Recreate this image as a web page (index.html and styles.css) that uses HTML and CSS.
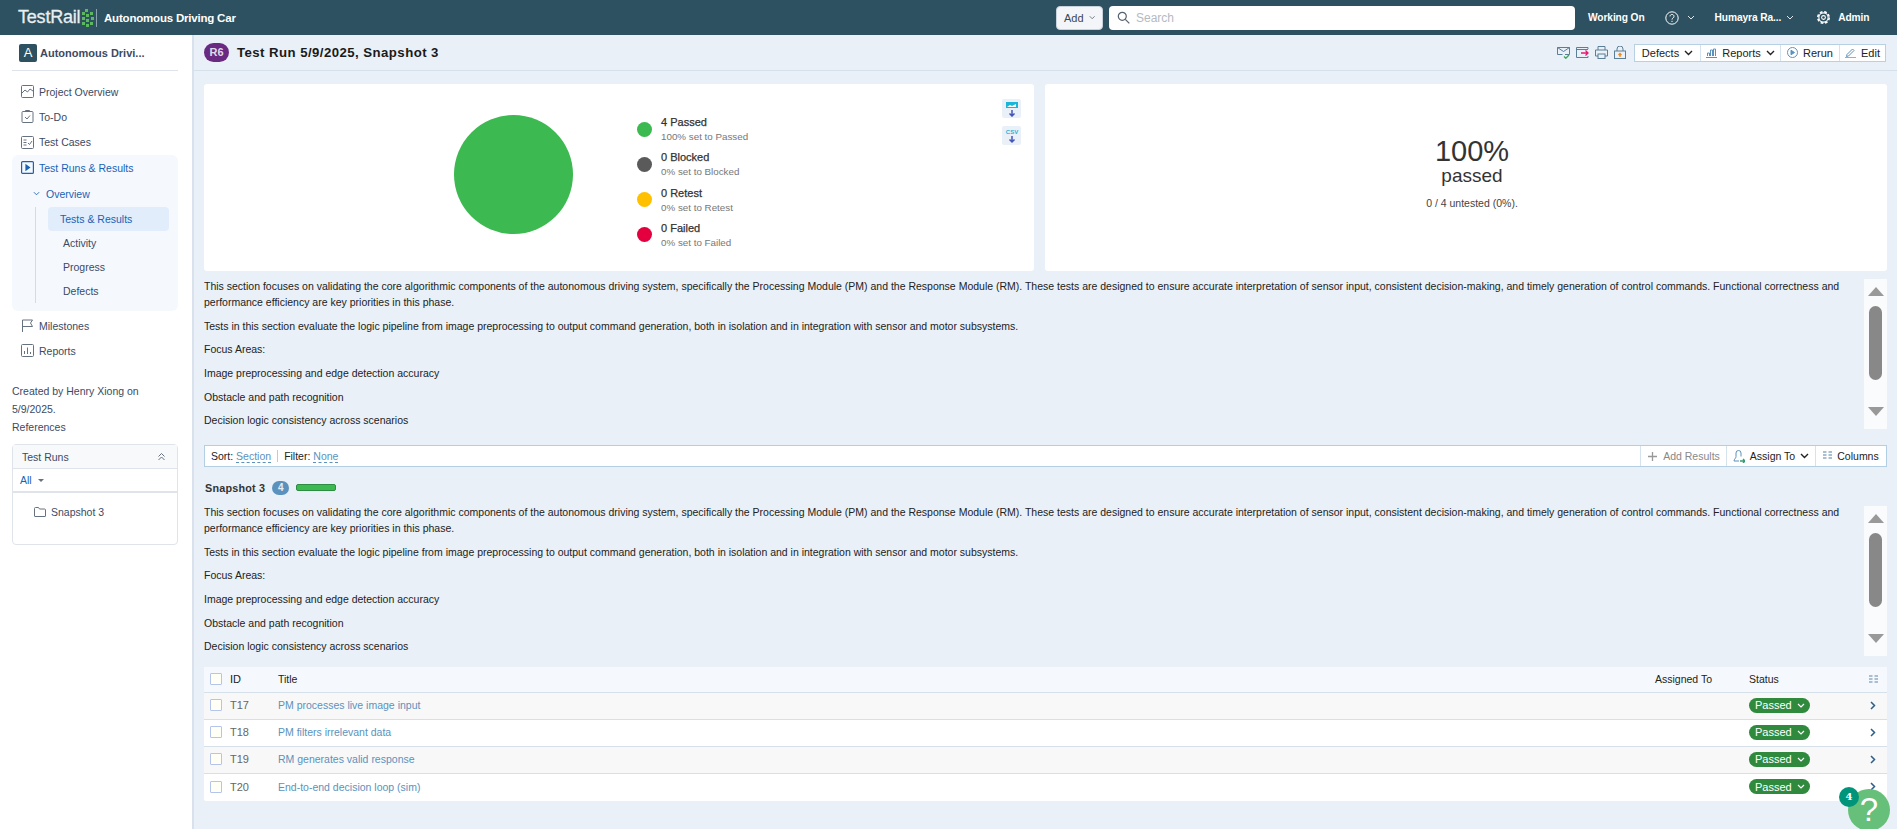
FILE: index.html
```html
<!DOCTYPE html>
<html lang="en">
<head>
    <meta charset="UTF-8" />
    <title>Test Run 5/9/2025, Snapshot 3 - TestRail</title>
    <link rel="stylesheet" href="styles.css">
</head>
<body>
    <header class="topbar">
        <div class="logo">
            <span class="logo-text">TestRail</span>
            <svg class="logo-mark" width="12" height="18" viewBox="0 0 12 18" fill="#5cb85c"><rect x="0" y="3" width="3" height="3"/><rect x="3" y="0" width="3" height="3"/><rect x="4" y="5" width="3" height="3"/><rect x="8" y="3" width="3" height="3"/><rect x="0" y="8" width="3" height="3"/><rect x="9" y="8" width="3" height="3"/><rect x="4" y="10" width="3" height="3"/><rect x="8" y="13" width="3" height="3"/><rect x="0" y="13" width="3" height="3"/><rect x="4" y="15" width="3" height="3"/></svg>
        </div>
        <div class="project-name">Autonomous Driving Car</div>
        <button class="add-btn">Add <svg width="8" height="5" viewBox="0 0 8 5" fill="none" stroke="#56616e"><path d="M1 1l3 3 3-3"/></svg></button>
        <div class="search">
            <svg width="13" height="13" viewBox="0 0 13 13" fill="none" stroke="#56616e" stroke-width="1.2"><circle cx="5.3" cy="5.3" r="4"/><path d="M8.3 8.3l4 4"/></svg>
            <span>Search</span>
        </div>
        <nav class="top-links">
            <span class="working-on">Working On</span>
            <span class="help-link">
                <svg width="14" height="14" viewBox="0 0 14 14" fill="none" stroke="#fff"><circle cx="7" cy="7" r="6.2"/><path d="M5 5.4c0-2.6 4-2.6 4 0 0 1.6-2 1.5-2 3.2"/><path d="M7 9.8v1.2"/></svg>
                <svg width="8" height="5" viewBox="0 0 8 5" fill="none" stroke="#dfe6ea"><path d="M1 1l3 3 3-3"/></svg>
            </span>
            <span class="user-link">Humayra Ra... <svg width="8" height="5" viewBox="0 0 8 5" fill="none" stroke="#dfe6ea"><path d="M1 1l3 3 3-3"/></svg></span>
            <span class="admin-link">
                <svg width="13" height="13" viewBox="0 0 24 24" fill="none" stroke="#fff"><circle cx="12" cy="12" r="10.500" stroke-width="3" stroke-dasharray="5 3.250"/><circle cx="12" cy="12" r="8.500" stroke-width="2"/><circle cx="12" cy="12" r="3.500" stroke-width="2"/></svg>
                Admin
            </span>
        </nav>
    </header>

    <div class="page">
        <aside class="sidebar">
            <div class="project-head">
                <span class="project-avatar">A</span>
                <span class="project-title">Autonomous Drivi...</span>
            </div>

            <ul class="nav">
                <li class="nav-item">
                    <svg width="13" height="13" viewBox="0 0 13 13" fill="none" stroke="#66727f"><rect x=".5" y=".5" width="12" height="12" rx="1"/><path d="M1 8l3-3 2.500 2L9 4l3 2"/></svg>
                    Project Overview
                </li>
                <li class="nav-item">
                    <svg width="13" height="13" viewBox="0 0 13 13" fill="none" stroke="#66727f"><rect x="1" y="1.500" width="11" height="11" rx="1"/><path d="M4.500 1V.5h4V1M4 7l2 2 3-3.500"/></svg>
                    To-Do
                </li>
                <li class="nav-item">
                    <svg width="13" height="13" viewBox="0 0 13 13" fill="none" stroke="#66727f"><rect x=".5" y=".5" width="12" height="12" rx="1"/><path d="M2.500 4h3M2.500 6.500h3M2.500 9h3M7 7l1.500 1.500L11 5"/></svg>
                    Test Cases
                </li>
                <li class="nav-group">
                    <div class="nav-item nav-item-active">
                        <svg width="13" height="13" viewBox="0 0 13 13" fill="none" stroke="#1a62b5" stroke-width="1.200"><rect x=".6" y=".6" width="11.800" height="11.800" rx="1"/><path d="M5 4l3.500 2.500L5 9z" fill="#1a62b5"/></svg>
                        Test Runs &amp; Results
                    </div>
                    <div class="nav-overview">
                        <svg width="7" height="5" viewBox="0 0 8 5" fill="none" stroke="#1a62b5"><path d="M1 1l3 3 3-3"/></svg>
                        Overview
                    </div>
                    <ul class="subnav">
                        <li class="subnav-item subnav-current">Tests &amp; Results</li>
                        <li class="subnav-item">Activity</li>
                        <li class="subnav-item">Progress</li>
                        <li class="subnav-item">Defects</li>
                    </ul>
                </li>
                <li class="nav-item">
                    <svg width="13" height="13" viewBox="0 0 13 13" fill="none" stroke="#66727f"><path d="M1.500 13V1h10l-2 3 2 3.500H1.500"/></svg>
                    Milestones
                </li>
                <li class="nav-item">
                    <svg width="13" height="13" viewBox="0 0 13 13" fill="none" stroke="#66727f"><rect x=".5" y=".5" width="12" height="12" rx="1"/><path d="M3.500 10V7M6.500 10V3.500M9.500 10V8"/></svg>
                    Reports
                </li>
            </ul>

            <div class="created">
                Created by Henry Xiong on 5/9/2025.<br>
                References
            </div>

            <div class="runs-box">
                <div class="runs-head">
                    <span>Test Runs</span>
                    <svg width="9" height="9" viewBox="0 0 9 9" fill="none" stroke="#66727f"><path d="M1.500 4.500l3-3 3 3M1.500 8l3-3 3 3"/></svg>
                </div>
                <div class="runs-filter">All <i class="caret"></i></div>
                <div class="runs-tree">
                    <svg width="12" height="10" viewBox="0 0 12 10" fill="none" stroke="#66727f"><path d="M.5 9V1.500a1 1 0 0 1 1-1h3l1 1.500h5a1 1 0 0 1 1 1V9a.5.5 0 0 1-.5.5h-10A.5.5 0 0 1 .5 9z"/></svg>
                    Snapshot 3
                </div>
            </div>
        </aside>

        <main class="main">
            <div class="title-bar">
                <span class="run-badge">R6</span>
                <h1>Test Run 5/9/2025, Snapshot 3</h1>
                <div class="title-icons">
                    <svg width="13" height="13" viewBox="0 0 13 13" fill="none" stroke="#5b7f96"><path d="M.5 1.500h12v7H8M.5 1.500v7h5M.5 1.500l6 4 6-4"/><path d="M7 10.500l1.800 1.800L12 9" stroke="#3aa655" stroke-width="1.300"/></svg>
                    <svg width="13" height="13" viewBox="0 0 13 13" fill="none" stroke="#5b7f96"><path d="M12 3V1.500H.5v10H12V10M.5 3.500H12"/><path d="M5 7h7M9.500 4.500L12 7l-2.500 2.500" stroke="#e5186d" stroke-width="1.300"/></svg>
                    <svg width="13" height="13" viewBox="0 0 13 13" fill="none" stroke="#5b7f96"><path d="M3 4V.5h7V4M3 10H.5V4h12v6H10"/><rect x="3" y="8" width="7" height="4.500"/></svg>
                    <svg width="12" height="13" viewBox="0 0 12 13" fill="none" stroke="#5b7f96"><rect x=".5" y="5" width="11" height="7.500"/><path d="M3 5V3a3 3 0 0 1 6 0v2"/><path d="M6 11V7.500M4.500 9L6 7.500 7.500 9" stroke="#ee8a1c" stroke-width="1.300"/></svg>
                </div>
                <div class="btn-group">
                    <span class="tool-btn">Defects <svg class="chev" width="9" height="6" viewBox="0 0 9 6" fill="none" stroke="#222" stroke-width="1.400"><path d="M1 1l3.500 3.500L8 1"/></svg></span>
                    <span class="tool-btn">
                        <svg width="11" height="11" viewBox="0 0 11 11" fill="none" stroke="#5b92bd"><path d="M1.500 9V6h2v3M4.500 9V3h2v6M7.500 9V2h2v7M0 10.500h11"/></svg>
                        Reports <svg class="chev" width="9" height="6" viewBox="0 0 9 6" fill="none" stroke="#222" stroke-width="1.400"><path d="M1 1l3.500 3.500L8 1"/></svg>
                    </span>
                    <span class="tool-btn">
                        <svg width="11" height="11" viewBox="0 0 11 11" fill="none" stroke="#5b92bd"><circle cx="5.500" cy="5.500" r="5"/><path d="M4 3.200l3.500 2.300L4 7.800z" fill="#5b92bd"/></svg>
                        Rerun
                    </span>
                    <span class="tool-btn">
                        <svg width="11" height="11" viewBox="0 0 11 11" fill="none" stroke="#5b92bd"><path d="M2 7.500L7.500 2 9 3.500 3.500 9 1.500 9.500zM0 10.800h11"/></svg>
                        Edit
                    </span>
                </div>
            </div>

            <div class="content">
                <div class="chart-row">
                    <section class="card chart-card">
                        <div class="pie"></div>
                        <ul class="legend">
                            <li class="legend-row"><i class="dot dot-passed"></i><div><b>4 Passed</b><small>100% set to Passed</small></div></li>
                            <li class="legend-row"><i class="dot dot-blocked"></i><div><b>0 Blocked</b><small>0% set to Blocked</small></div></li>
                            <li class="legend-row"><i class="dot dot-retest"></i><div><b>0 Retest</b><small>0% set to Retest</small></div></li>
                            <li class="legend-row"><i class="dot dot-failed"></i><div><b>0 Failed</b><small>0% set to Failed</small></div></li>
                        </ul>
                        <div class="export-icons">
                            <span class="export-icon">
                                <svg width="14" height="16" viewBox="0 0 14 16"><rect x="1" y="1" width="12" height="6" fill="#1bb5d8"/><path d="M2 6l3-2 2 1 4-2v3z" fill="#fff"/><path d="M7 9v6M4.500 12.500L7 15l2.500-2.500" fill="none" stroke="#4353b8" stroke-width="1.500"/></svg>
                            </span>
                            <span class="export-icon">
                                <svg width="14" height="16" viewBox="0 0 14 16"><text x="7" y="6" text-anchor="middle" class="csv-label">CSV</text><path d="M7 8v6M4.500 11.500L7 14l2.500-2.500" fill="none" stroke="#4353b8" stroke-width="1.500"/></svg>
                            </span>
                        </div>
                    </section>
                    <section class="card summary-card">
                        <div class="summary-pct">100%</div>
                        <div class="summary-word">passed</div>
                        <div class="summary-note">0 / 4 untested (0%).</div>
                    </section>
                </div>

                <div class="desc">
                    <div class="desc-text">
                        <p>This section focuses on validating the core algorithmic components of the autonomous driving system, specifically the Processing Module (PM) and the Response Module (RM). These tests are designed to ensure accurate interpretation of sensor input, consistent decision-making, and timely generation of control commands. Functional correctness and performance efficiency are key priorities in this phase.</p>
                        <p>Tests in this section evaluate the logic pipeline from image preprocessing to output command generation, both in isolation and in integration with sensor and motor subsystems.</p>
                        <p>Focus Areas:</p>
                        <p>Image preprocessing and edge detection accuracy</p>
                        <p>Obstacle and path recognition</p>
                        <p>Decision logic consistency across scenarios</p>
                    </div>
                    <div class="scroll"><i class="arrow-up"></i><i class="thumb"></i><i class="arrow-down"></i></div>
                </div>

                <div class="toolbar">
                    <div class="sort-filter">
                        <span class="sort-part">Sort: <a>Section</a></span>
                        <span class="filter-part">Filter: <a>None</a></span>
                    </div>
                    <div class="toolbar-actions">
                        <span class="action action-muted">
                            <svg width="11" height="11" viewBox="0 0 11 11" stroke="#999" stroke-width="1.300"><path d="M5.500 1v9M1 5.500h9"/></svg>
                            Add Results
                        </span>
                        <span class="action">
                            <svg width="12" height="13" viewBox="0 0 12 13" fill="none" stroke="#5b92bd"><path d="M1 11c0-2 2-2.500 2-4.500V3a2.500 2.500 0 0 1 5 0v3.500"/><path d="M1 11h5" /><path d="M7 11h5M10 9l2 2-2 2" stroke="#2f9e6e" stroke-width="1.400"/></svg>
                            Assign To <svg class="chev" width="9" height="6" viewBox="0 0 9 6" fill="none" stroke="#222" stroke-width="1.400"><path d="M1 1l3.500 3.500L8 1"/></svg>
                        </span>
                        <span class="action">
                            <svg width="9" height="10" viewBox="0 0 9 10" fill="#a9bfd3"><path d="M0 0h3.500v2H0zM0 3h3.500v2H0zM0 6h3.500v2H0zM5.500 0H9v2H5.500zM5.500 3H9v2H5.500zM5.500 6H9v2H5.500z"/></svg>
                            Columns
                        </span>
                    </div>
                </div>

                <div class="group-title">
                    <span class="group-name">Snapshot 3</span>
                    <span class="count-badge">4</span>
                    <span class="mini-bar"></span>
                </div>

                <div class="desc">
                    <div class="desc-text">
                        <p>This section focuses on validating the core algorithmic components of the autonomous driving system, specifically the Processing Module (PM) and the Response Module (RM). These tests are designed to ensure accurate interpretation of sensor input, consistent decision-making, and timely generation of control commands. Functional correctness and performance efficiency are key priorities in this phase.</p>
                        <p>Tests in this section evaluate the logic pipeline from image preprocessing to output command generation, both in isolation and in integration with sensor and motor subsystems.</p>
                        <p>Focus Areas:</p>
                        <p>Image preprocessing and edge detection accuracy</p>
                        <p>Obstacle and path recognition</p>
                        <p>Decision logic consistency across scenarios</p>
                    </div>
                    <div class="scroll"><i class="arrow-up"></i><i class="thumb"></i><i class="arrow-down"></i></div>
                </div>

                <div class="tests">
                    <div class="tests-row tests-head">
                        <i class="check"></i>
                        <span class="col-id">ID</span>
                        <span class="col-title">Title</span>
                        <span class="col-assigned">Assigned To</span>
                        <span class="col-status">Status</span>
                        <span class="col-more"><svg width="9" height="8" viewBox="0 0 9 8" fill="#a9bfd3"><path d="M0 0h3.500v2H0zM0 3h3.500v2H0zM0 6h3.500v2H0zM5.500 0H9v2H5.500zM5.500 3H9v2H5.500zM5.500 6H9v2H5.500z"/></svg></span>
                    </div>
                    <div class="tests-row tests-odd">
                        <i class="check"></i>
                        <span class="col-id">T17</span>
                        <a class="col-title">PM processes live image input</a>
                        <span class="col-assigned"></span>
                        <span class="col-status"><span class="status-pill">Passed <svg width="8" height="5" viewBox="0 0 8 5" fill="none" stroke="#fff" stroke-width="1.200"><path d="M1 1l3 3 3-3"/></svg></span></span>
                        <span class="col-more"><svg width="6" height="9" viewBox="0 0 6 9" fill="none" stroke="#2d5f8a" stroke-width="1.500"><path d="M1 1l3.500 3.500L1 8"/></svg></span>
                    </div>
                    <div class="tests-row">
                        <i class="check"></i>
                        <span class="col-id">T18</span>
                        <a class="col-title">PM filters irrelevant data</a>
                        <span class="col-assigned"></span>
                        <span class="col-status"><span class="status-pill">Passed <svg width="8" height="5" viewBox="0 0 8 5" fill="none" stroke="#fff" stroke-width="1.200"><path d="M1 1l3 3 3-3"/></svg></span></span>
                        <span class="col-more"><svg width="6" height="9" viewBox="0 0 6 9" fill="none" stroke="#2d5f8a" stroke-width="1.500"><path d="M1 1l3.500 3.500L1 8"/></svg></span>
                    </div>
                    <div class="tests-row tests-odd">
                        <i class="check"></i>
                        <span class="col-id">T19</span>
                        <a class="col-title">RM generates valid response</a>
                        <span class="col-assigned"></span>
                        <span class="col-status"><span class="status-pill">Passed <svg width="8" height="5" viewBox="0 0 8 5" fill="none" stroke="#fff" stroke-width="1.200"><path d="M1 1l3 3 3-3"/></svg></span></span>
                        <span class="col-more"><svg width="6" height="9" viewBox="0 0 6 9" fill="none" stroke="#2d5f8a" stroke-width="1.500"><path d="M1 1l3.500 3.500L1 8"/></svg></span>
                    </div>
                    <div class="tests-row">
                        <i class="check"></i>
                        <span class="col-id">T20</span>
                        <a class="col-title">End-to-end decision loop (sim)</a>
                        <span class="col-assigned"></span>
                        <span class="col-status"><span class="status-pill">Passed <svg width="8" height="5" viewBox="0 0 8 5" fill="none" stroke="#fff" stroke-width="1.200"><path d="M1 1l3 3 3-3"/></svg></span></span>
                        <span class="col-more"><svg width="6" height="9" viewBox="0 0 6 9" fill="none" stroke="#2d5f8a" stroke-width="1.500"><path d="M1 1l3.500 3.500L1 8"/></svg></span>
                    </div>
                </div>
            </div>
        </main>
    </div>

    <div class="help-fab">?<span class="help-count">4</span></div>
</body>
</html>
```

FILE: styles.css
```css
* {
    box-sizing: border-box;
}

body {
    margin: 0;
    height: 829px;
    overflow: hidden;
    background: #e9f0f7;
    font-family: 'Liberation Sans', Arial, sans-serif;
    font-size: 10.5px;
    color: #222;
}

ul {
    list-style: none;
    margin: 0;
    padding: 0;
}

/* top bar */
.topbar {
    display: flex;
    align-items: center;
    height: 35px;
    background: #2d5160;
    color: #fff;
}

.logo {
    display: flex;
    align-items: center;
    gap: 2px;
    width: 97px;
    height: 18px;
    padding-left: 18px;
    border-right: 1px solid #8aa2ad;
}

.logo-text {
    font-size: 18px;
    letter-spacing: -0.2px;
    color: #e8eef1;
    -webkit-text-stroke: 0.3px #e8eef1;
}

.project-name {
    flex: 1;
    padding-left: 7px;
    font-size: 11.5px;
    font-weight: bold;
    letter-spacing: -0.2px;
}

.add-btn {
    display: flex;
    align-items: center;
    gap: 5px;
    width: 47px;
    height: 24px;
    padding: 0 7px;
    border: 1px solid #c8d2dc;
    border-radius: 4px;
    background: #f3f5f8;
    font: inherit;
    font-size: 11px;
    color: #3c4654;
}

.search {
    display: flex;
    align-items: center;
    gap: 6px;
    width: 466px;
    height: 24px;
    margin-left: 6px;
    padding-left: 8px;
    border-radius: 4px;
    background: #fff;
    font-size: 12px;
    color: #b5bac2;
}

.top-links {
    display: flex;
    align-items: center;
    width: 322px;
    padding-left: 13px;
    font-size: 10.2px;
    font-weight: bold;
    letter-spacing: -0.1px;
}

.help-link {
    display: flex;
    align-items: center;
    gap: 8px;
    margin-left: 20px;
}

.user-link {
    display: flex;
    align-items: center;
    gap: 5px;
    margin-left: 20px;
}

.admin-link {
    display: flex;
    align-items: center;
    gap: 8px;
    margin-left: 23px;
}

/* page */
.page {
    display: flex;
    height: 794px;
}

.sidebar {
    width: 194px;
    flex-shrink: 0;
    padding: 0 14px 0 12px;
    background: #fff;
    border-right: 2px solid #d9e1ec;
    color: #3c4a63;
}

.project-head {
    display: flex;
    align-items: center;
    gap: 3px;
    height: 36px;
    padding: 1px 7px 0;
    border-bottom: 1px solid #dfe3ea;
}

.project-avatar {
    width: 18px;
    height: 18px;
    border-radius: 2px;
    background: #2d5160;
    color: #fff;
    font-size: 13px;
    line-height: 17px;
    text-align: center;
}

.project-title {
    font-size: 11px;
    font-weight: bold;
}

.nav {
    padding-top: 8px;
}

.nav-item {
    display: flex;
    align-items: center;
    gap: 5px;
    height: 25.3px;
    padding-left: 9px;
}

.nav-group {
    padding-bottom: 8px;
    border-radius: 6px;
    background: #f5f9fe;
}

.nav-item-active {
    height: 26px;
    color: #1a62b5;
}

.nav-overview {
    display: flex;
    align-items: center;
    gap: 6px;
    height: 26px;
    padding-left: 21px;
    padding-right: 0;
    color: #1a62b5;
}

.nav-group + .nav-item {
    margin-top: 2px;
}

.subnav {
    margin-left: 23px;
    padding-right: 9px;
    border-left: 1px solid #d4dbe5;
}

.subnav-item {
    height: 24px;
    padding-left: 27px;
    line-height: 24px;
}

.subnav-current {
    margin-left: 12px;
    padding-left: 12px;
    border-radius: 4px;
    background: #e1edfb;
    color: #1a62b5;
}

.created {
    margin-top: 19px;
    padding-right: 2px;
    line-height: 18px;
}

.runs-box {
    height: 101px;
    margin-top: 8px;
    border: 1px solid #dfe3ea;
    border-radius: 4px;
}

.runs-head {
    display: flex;
    align-items: center;
    justify-content: space-between;
    height: 24px;
    padding: 0 11px 0 9px;
    border-bottom: 1px solid #dfe3ea;
    background: #f8f9fb;
}

.runs-filter {
    display: flex;
    align-items: center;
    gap: 6px;
    height: 24px;
    padding-left: 7px;
    border-bottom: 2px solid #dfe3ea;
    color: #1a62b5;
}

.caret {
    border-top: 3px solid #66727f;
    border-left: 3px solid transparent;
    border-right: 3px solid transparent;
}

.runs-tree {
    display: flex;
    align-items: center;
    gap: 5px;
    padding: 13px 0 0 21px;
}

/* main */
.main {
    flex: 1;
    min-width: 0;
}

.title-bar {
    display: flex;
    align-items: center;
    height: 36px;
    padding: 0 11px 0 10px;
    border-bottom: 1px solid #d5e0eb;
}

.run-badge {
    width: 25px;
    height: 19px;
    border-radius: 10px;
    background: #6a2a82;
    color: #dcdce6;
    font-size: 11px;
    font-weight: bold;
    line-height: 19px;
    text-align: center;
}

h1 {
    flex: 1;
    margin: 0 0 0 8px;
    font-size: 13.2px;
    letter-spacing: 0.45px;
    color: #1a1a1a;
}

.title-icons {
    display: flex;
    align-items: center;
    gap: 6px;
    margin-right: 8px;
}

.btn-group {
    display: flex;
    height: 18px;
    border: 1px solid #b8d0e3;
    background: #fff;
    font-size: 11px;
}

.tool-btn {
    display: flex;
    align-items: center;
    justify-content: center;
    gap: 5px;
    border-left: 1px solid #d5e3ee;
}

.tool-btn:nth-child(1) { width: 65px; border-left: 0; }
.tool-btn:nth-child(2) { width: 80px; }
.tool-btn:nth-child(3) { width: 59px; }
.tool-btn:nth-child(4) { width: 46px; }

.content {
    padding: 13px 10px 0;
}

.chart-row {
    display: flex;
    gap: 11px;
}

.card {
    height: 187px;
    border-radius: 3px;
    background: #fff;
}

.chart-card {
    position: relative;
    display: flex;
    align-items: center;
    width: 830px;
    padding-left: 250px;
}

.pie {
    width: 119px;
    height: 119px;
    margin-bottom: 7px;
    border-radius: 50%;
    background: #3cb950;
}

.legend {
    margin: 9px 0 0 64px;
}

.legend-row {
    display: flex;
    align-items: center;
    gap: 9px;
    height: 35.3px;
}

.legend-row b,
.legend-row small {
    display: block;
}

.legend-row b {
    font-size: 11px;
    font-weight: normal;
    -webkit-text-stroke: 0.25px #333;
    color: #333;
}

.legend-row small {
    margin-top: 3px;
    font-size: 9.8px;
    color: #777;
}

.dot {
    width: 15px;
    height: 15px;
    border-radius: 50%;
}

.dot-passed { background: #3cb950; }
.dot-blocked { background: #5a5a5a; }
.dot-retest { background: #ffc000; }
.dot-failed { background: #e4003f; }

.export-icons {
    position: absolute;
    top: 15px;
    right: 13px;
    display: flex;
    flex-direction: column;
    gap: 8px;
}

.export-icon {
    display: flex;
    align-items: center;
    justify-content: center;
    width: 19px;
    height: 19px;
    border-radius: 2px;
    background: #e9f0f7;
}

.csv-label {
    font-size: 6px;
    font-weight: bold;
    fill: #1bb5d8;
}

.summary-card {
    flex: 1;
    padding: 51px 0 0 12px;
    text-align: center;
}

.summary-pct {
    font-size: 29px;
    line-height: 32px;
    color: #333;
}

.summary-word {
    font-size: 19px;
    line-height: 18px;
    color: #333;
}

.summary-note {
    margin-top: 12px;
    color: #444;
}

.desc {
    display: flex;
    justify-content: space-between;
    height: 150px;
    margin-top: 8px;
}

.desc-text {
    width: 1640px;
    height: 150px;
    margin-top: -1px;
    overflow: hidden;
}

.desc-text p {
    margin: 0 0 7.7px;
    line-height: 16px;
    color: #222;
}

.scroll {
    display: flex;
    flex-direction: column;
    align-items: center;
    width: 23px;
    padding: 8px 0;
    background: #fafbfc;
}

.arrow-up {
    border-bottom: 9px solid #999;
    border-left: 8px solid transparent;
    border-right: 8px solid transparent;
}

.arrow-down {
    margin-top: 27px;
    border-top: 9px solid #999;
    border-left: 8px solid transparent;
    border-right: 8px solid transparent;
}

.thumb {
    width: 13px;
    height: 74px;
    margin-top: 10px;
    border-radius: 7px;
    background: #888;
}

.toolbar {
    display: flex;
    justify-content: space-between;
    height: 22px;
    margin-top: 16px;
    border: 1px solid #b3cfe3;
    background: #fff;
}

.sort-filter {
    display: flex;
    align-items: center;
    padding-left: 6px;
}

.sort-filter a {
    border-bottom: 1px dashed #5b92bd;
    color: #5b92bd;
}

.sort-part {
    padding-right: 6px;
    border-right: 1px solid #b3cfe3;
}

.filter-part {
    padding-left: 6px;
}

.toolbar-actions {
    display: flex;
}

.action {
    display: flex;
    align-items: center;
    justify-content: center;
    gap: 5px;
    border-left: 1px solid #d5e3ee;
}

.action:nth-child(1) { width: 86px; }
.action:nth-child(2) { width: 89px; }
.action:nth-child(3) { width: 71px; }

.action-muted {
    color: #888;
}

.group-title {
    display: flex;
    align-items: center;
    height: 20px;
    margin-top: 11px;
}

.group-name {
    margin-left: 1px;
    font-size: 10.8px;
    font-weight: bold;
    letter-spacing: 0.2px;
    color: #333;
}

.count-badge {
    width: 17px;
    height: 14px;
    margin-left: 7px;
    border-radius: 8px;
    background: #5b92bd;
    color: #e6eef5;
    font-size: 10px;
    font-weight: bold;
    line-height: 14px;
    text-align: center;
}

.mini-bar {
    width: 40px;
    height: 7px;
    margin: -2px 0 0 7px;
    border: 1px solid #2e8c43;
    border-radius: 2px;
    background: #3cb950;
}

.group-title + .desc {
    margin-top: 8px;
}

.group-title + .desc .desc-text {
    margin-top: -2px;
}

.tests {
    margin-top: 11px;
    border-radius: 2px;
    background: #fff;
}

.tests-row {
    display: flex;
    align-items: center;
    height: 27px;
    padding-bottom: 2px;
    border-bottom: 1px solid #d5e0eb;
}

.tests-row:last-child {
    border-bottom: 0;
}

.tests-head {
    height: 26px;
    background: #f5f9fd;
    color: #222;
}

.tests-odd {
    background: #f8f8f8;
}

.check {
    width: 12px;
    height: 12px;
    margin-left: 6px;
    border: 1px solid #b4c4ea;
    border-radius: 1px;
    background: #fffff6;
}

.col-id {
    width: 48px;
    margin-left: 8px;
    font-size: 11px;
    color: #666;
}

.tests-head .col-id,
.tests-head .col-title {
    color: #222;
}

.col-title {
    flex: 1;
    color: #5b92bd;
}

.col-assigned {
    width: 94px;
}

.col-status {
    width: 114px;
}

.col-more {
    display: flex;
    justify-content: center;
    width: 20px;
    margin-right: 4px;
}

.status-pill {
    display: inline-flex;
    align-items: center;
    gap: 5px;
    height: 15px;
    padding: 0 5px 0 6px;
    border-radius: 8px;
    background: #2f8a3e;
    color: #fff;
    font-size: 11px;
}

.help-fab {
    position: absolute;
    left: 1848px;
    top: 789px;
    width: 42px;
    height: 42px;
    border-radius: 50%;
    background: #66c07a;
    color: #fff;
    font-size: 33px;
    line-height: 42px;
    text-align: center;
}

.help-count {
    position: absolute;
    left: -9px;
    top: -2px;
    width: 20px;
    height: 20px;
    border-radius: 50%;
    background: #00957a;
    font-family: 'DejaVu Serif', serif;
    font-size: 10px;
    font-weight: bold;
    line-height: 20px;
}
```
